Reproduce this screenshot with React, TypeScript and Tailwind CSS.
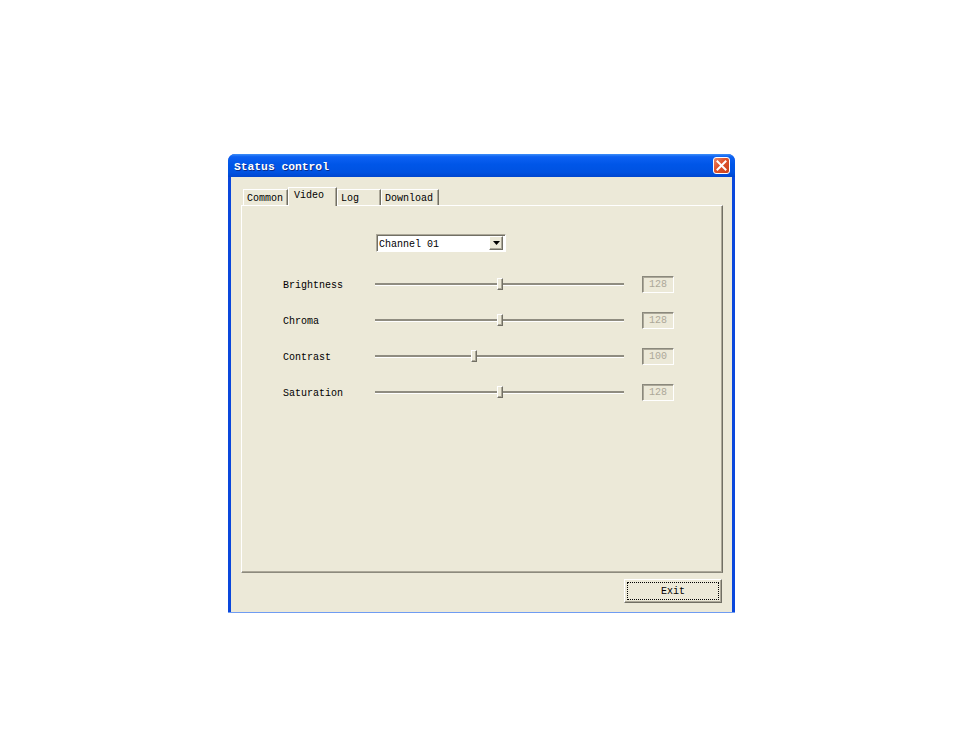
import React from "react";

const rows = [
  { label: "Brightness", value: 128 },
  { label: "Chroma", value: 128 },
  { label: "Contrast", value: 100 },
  { label: "Saturation", value: 128 },
];

function Tab({ label, w, selected }: { label: string; w: number; selected?: boolean }) {
  if (selected) {
    return (
      <div
        className="relative z-10 h-[19px] -mb-[1px] bg-[#ECE9D8] border-t border-l border-white border-r border-r-[#716F64] shadow-[inset_-1px_0_#ACA899] flex items-start pt-[2px] pl-[5px] text-[10px] leading-[12px] text-black"
        style={{ width: w }}
      >
        {label}
      </div>
    );
  }
  return (
    <div
      className="h-[16px] bg-[#ECE9D8] border-t border-l border-white border-r border-r-[#716F64] shadow-[inset_-1px_0_#ACA899] flex items-end pb-[1px] pl-[3px] text-[10px] leading-[11px] text-black"
      style={{ width: w }}
    >
      {label}
    </div>
  );
}

function Slider({ value }: { value: number }) {
  const left = Math.round((value / 255) * 242) + 1;
  return (
    <div className="relative w-[249px] h-[14px] flex items-center">
      <div className="w-full h-[3px] bg-[#8f8c80] border-b border-b-white" />
      <div
        className="absolute top-[1px] w-[6px] h-[12px] bg-[#ECE9D8] border-t border-l border-white border-r border-b border-r-[#716F64] border-b-[#716F64] shadow-[inset_-1px_-1px_#ACA899]"
        style={{ left }}
      />
    </div>
  );
}

export default function App() {
  return (
    <div className="w-[954px] h-[737px] bg-white pt-[154px] pl-[228px] font-['Liberation_Mono',monospace]">
      <div className="w-[507px] h-[459px] flex flex-col rounded-t-[7px] overflow-hidden bg-[#0a47dc] border-b border-b-[#6f9cf2]">
        <div className="h-[23px] shrink-0 flex items-center pl-[6px] pr-[5px] bg-[linear-gradient(to_bottom,#3e8ff8_0%,#0d61f2_12%,#0056e8_45%,#0052e1_80%,#0046cf_100%)]">
          <span className="pt-[5px] text-white font-bold text-[11.3px] leading-none [text-shadow:1px_1px_#0a2d8c]">
            Status control
          </span>
          <div className="ml-auto w-[17px] h-[17px] rounded-[3px] border border-white bg-[linear-gradient(135deg,#ea8a6c_0%,#e0552f_40%,#c8401a_100%)] flex items-center justify-center">
            <svg width="11" height="11" viewBox="0 0 11 11">
              <path d="M1.5 1.5 L9.5 9.5 M9.5 1.5 L1.5 9.5" stroke="white" strokeWidth="2" strokeLinecap="square" />
            </svg>
          </div>
        </div>
        <div className="flex-1 mx-[3px] bg-[#ECE9D8] flex flex-col pt-[10px] pl-[10px] pr-[9px]">
          <div className="h-[18px] flex items-end pl-[2px]">
            <Tab label="Common" w={45} />
            <Tab label="Video" w={49} selected />
            <Tab label="Log" w={44} />
            <Tab label="Download" w={58} />
          </div>
          <div className="h-[368px] border-t border-l border-white border-r border-b border-r-[#716F64] border-b-[#8c8a7d] shadow-[inset_-1px_-1px_#ACA899] flex flex-col pt-[28px]">
            <div className="ml-[134px] w-[130px] h-[18px] bg-white border-t border-l border-t-[#ACA899] border-l-[#ACA899] border-b border-r border-white shadow-[inset_1px_1px_#716F64] flex items-center pl-[2px] pr-[2px]">
              <span className="pt-[4px] text-[10px] leading-none text-black">Channel 01</span>
              <div className="ml-auto w-[14px] h-[14px] bg-[#ECE9D8] border-t border-l border-white border-r border-b border-r-[#716F64] border-b-[#716F64] shadow-[inset_-1px_-1px_#ACA899] flex items-center justify-center">
                <svg width="7" height="4" viewBox="0 0 7 4">
                  <path d="M0 0 H7 L3.5 4 Z" fill="black" />
                </svg>
              </div>
            </div>
            <div className="mt-[14px] flex flex-col">
              {rows.map((r) => (
                <div key={r.label} className="h-[36px] flex items-center pl-[41px]">
                  <span className="w-[92px] pt-[4px] text-[10px] leading-none text-black">{r.label}</span>
                  <Slider value={r.value} />
                  <div className="ml-[18px] w-[32px] h-[17px] pt-[1px] border-t border-l border-t-[#8a887c] border-l-[#8a887c] border-b border-r border-white shadow-[inset_1px_1px_#ACA899] flex items-center justify-center text-[10px] leading-none text-[#ACA899]">
                    {r.value}
                  </div>
                </div>
              ))}
            </div>
          </div>
          <div className="flex justify-end mt-[6px] pr-[1px]">
            <div className="w-[98px] h-[24px] bg-[#ECE9D8] border-t border-l border-white border-r border-b border-r-[#716F64] border-b-[#716F64] shadow-[inset_-1px_-1px_#ACA899] p-[2px]">
              <div className="w-full h-full pt-[2px] border border-dotted border-black flex items-center justify-center text-[10px] leading-none text-black">
                Exit
              </div>
            </div>
          </div>
        </div>
      </div>
    </div>
  );
}
